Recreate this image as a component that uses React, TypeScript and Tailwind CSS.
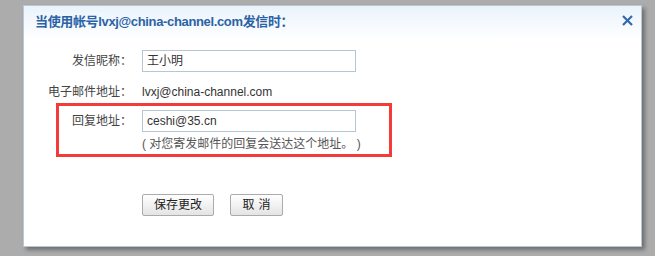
import React from "react";

const font = { fontFamily: '"Liberation Sans", "Noto Sans CJK SC", sans-serif' };

export default function App() {
  return (
    <div className="w-[655px] h-[256px] bg-[#acacac] pl-[23px] pt-[5px]" style={font}>
      <div className="w-[619px] h-[242px] bg-white border border-[#b8c8d6] shadow-[3px_3px_4px_rgba(0,0,0,0.35)] flex flex-col">
        <div className="h-[34px] bg-gradient-to-b from-[#eaf3fb] to-white flex items-center justify-between pl-[11px] pr-[8px]">
          <span className="text-[13px] font-bold text-[#2b62a6] leading-none mt-[-3px] tracking-[-0.35px]">
            当使用帐号lvxj@china-channel.com发信时：
          </span>
          <svg width="11" height="11" viewBox="0 0 11 11" className="mt-[-5px]">
            <path d="M1 1 L10 10 M10 1 L1 10" stroke="#3469a8" strokeWidth="2.2" />
          </svg>
        </div>

        <div className="flex items-center mt-[10px] h-[22px]">
          <div className="w-[108px] text-right text-[12px] text-[#444]">发信昵称：</div>
          <div className="ml-[10px] w-[214px] h-[22px] border border-[#b7c6d3] px-[4px] flex items-center text-[12px] text-[#333]">
            王小明
          </div>
        </div>

        <div className="flex items-center mt-[10px] h-[20px]">
          <div className="w-[108px] text-right text-[12px] text-[#444]">电子邮件地址：</div>
          <div className="ml-[10px] text-[12px] text-[#333]">lvxj@china-channel.com</div>
        </div>

        <div className="ml-[32px] mt-[1px] w-[336px] h-[54px] border-[3px] border-[#f23b3b] pt-[4px]">
          <div className="flex items-center h-[22px]">
            <div className="w-[73px] text-right text-[12px] text-[#444]">回复地址：</div>
            <div className="ml-[10px] w-[214px] h-[22px] border border-[#b7c6d3] px-[4px] flex items-center text-[12px] text-[#333]">
              ceshi@35.cn
            </div>
          </div>
          <div className="ml-[83px] mt-[2px] h-[20px] flex items-center text-[12px] text-[#555] whitespace-nowrap">
            (&nbsp;对您寄发邮件的回复会送达这个地址。&nbsp;)
          </div>
        </div>

        <div className="flex ml-[118px] mt-[37px] gap-[16px]">
          <button className="w-[72px] h-[22px] border border-[#ababab] rounded-[2px] bg-gradient-to-b from-white to-[#e4e4e4] text-[12px] text-[#222] flex items-center justify-center">
            保存更改
          </button>
          <button className="w-[53px] h-[22px] border border-[#ababab] rounded-[2px] bg-gradient-to-b from-white to-[#e4e4e4] text-[12px] text-[#222] flex items-center justify-center gap-[4px]">
            <span>取</span>
            <span>消</span>
          </button>
        </div>
      </div>
    </div>
  );
}
